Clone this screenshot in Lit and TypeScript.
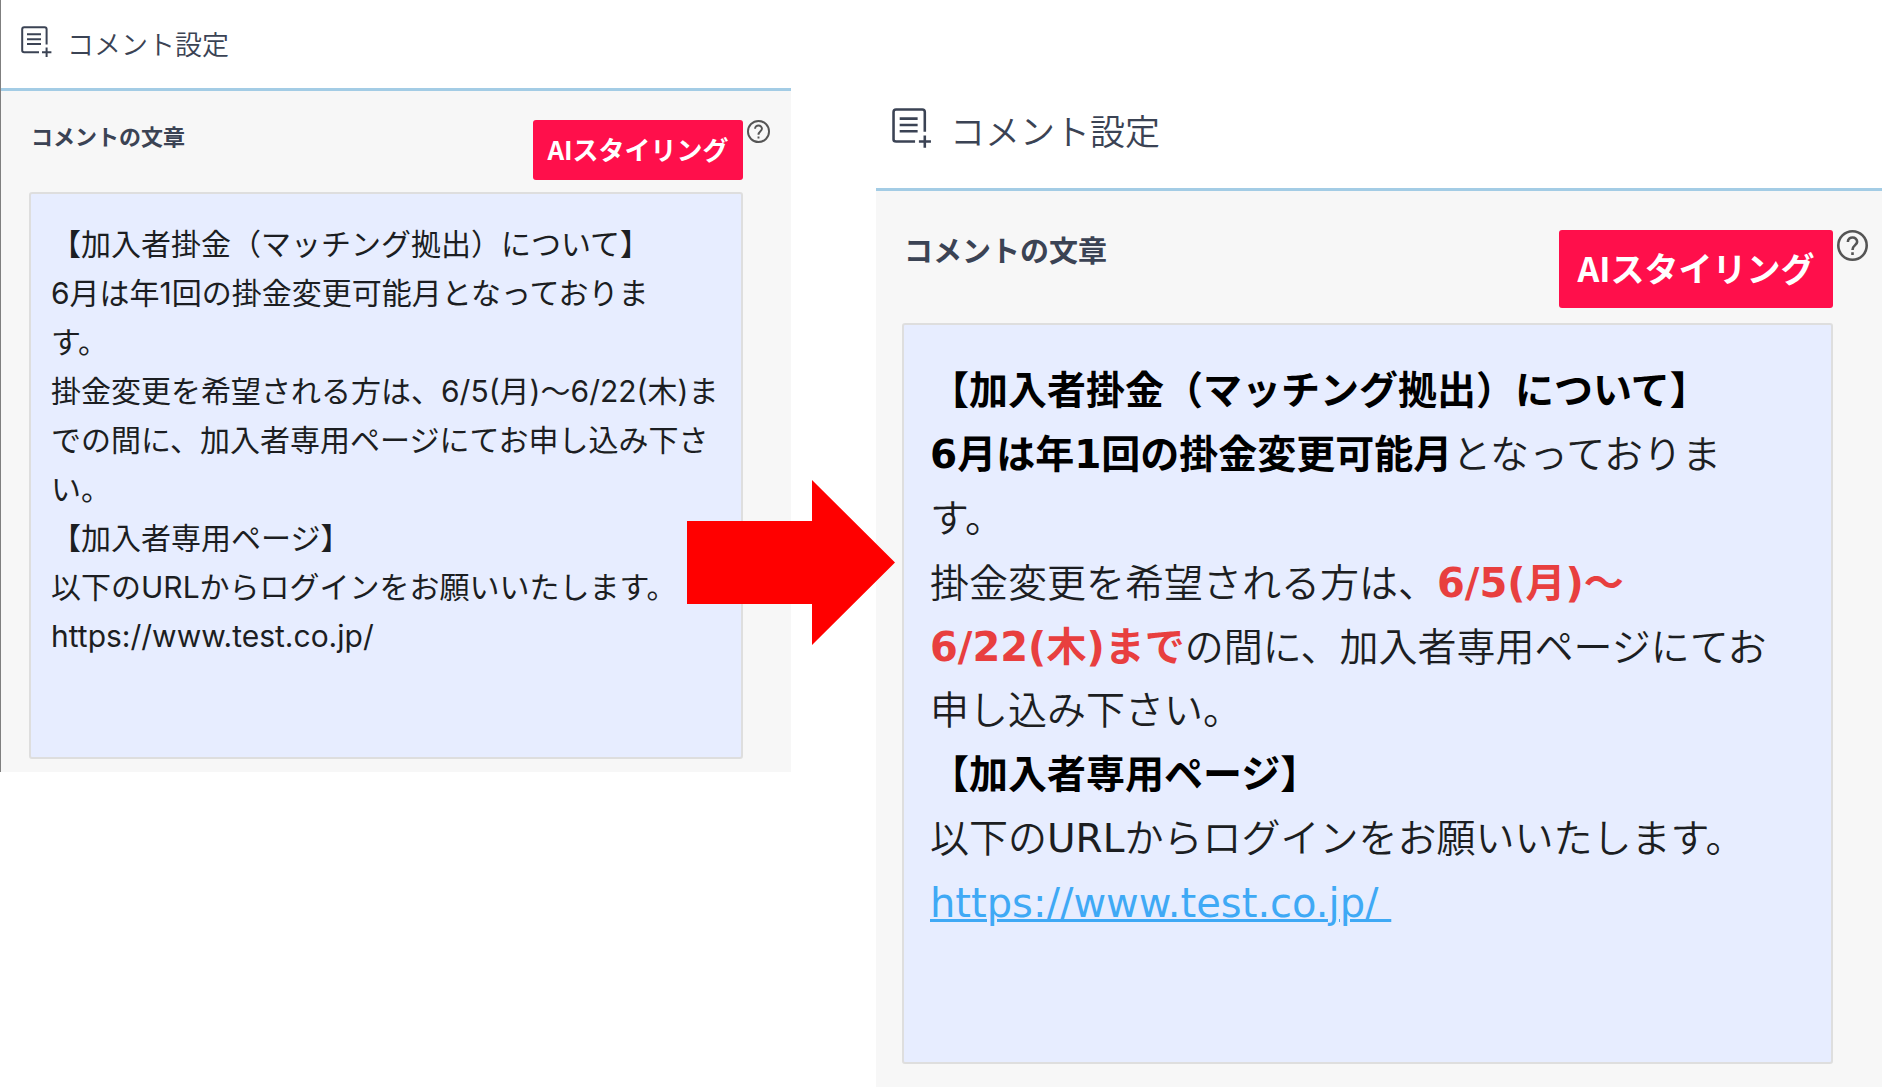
import { LitElement, html, css, svg, TemplateResult } from "lit";
import { customElement, property } from "lit/decorators.js";

const addNoteIcon = svg`
  <path d="M25.6 18.5V3.2Q25.6 1.2 23.6 1.2H3.2Q1.2 1.2 1.2 3.2V24.6Q1.2 26.2 3.2 26.2H18" />
  <path d="M6 8.3H20M6 13.2H20M6 18.1H20" />
  <path d="M25.6 21.4V31M21 26.2H30.4" />
`;

/** Comment settings panel: header, toolbar and an editing area. */
@customElement("comment-panel")
export class CommentPanel extends LitElement {
  @property({ reflect: true }) size: "small" | "large" = "small";

  static styles = css`
    :host {
      display: block;
      box-sizing: border-box;
      color: #3b4354;
      --title: 27px;
      --label: 22px;
      --action: 26px;
      --head-height: 88px;
      --head-pad: 20px;
      --head-bottom: 2px;
      --head-gap: 14px;
      --icon: 32px;
      --body-top: 29px;
      --body-left: 28px;
      --body-bottom: 13px;
      --label-line: 30px;
      --action-width: 210px;
      --action-height: 60px;
      --row-gap: 12px;
      --gutter: 48px;
      --help: 23px;
    }
    :host([size="small"]) {
      border-left: 1px solid #7f7f7f;
    }
    :host([size="large"]) {
      --title: 35px;
      --label: 29px;
      --action: 34px;
      --head-height: 102px;
      --head-pad: 16px;
      --head-bottom: 16px;
      --head-gap: 17px;
      --icon: 41px;
      --body-top: 39px;
      --body-left: 26px;
      --body-bottom: 23px;
      --label-line: 38px;
      --action-width: 274px;
      --action-height: 78px;
      --row-gap: 15px;
      --gutter: 49px;
      --help: 31px;
    }
    .head {
      display: flex;
      align-items: center;
      gap: var(--head-gap);
      box-sizing: content-box;
      height: calc(var(--head-height) - var(--head-bottom));
      padding: 0 0 var(--head-bottom) var(--head-pad);
      border-bottom: 3px solid #a3cce5;
      background: #fff;
    }
    .note {
      width: var(--icon);
      height: var(--icon);
      margin-bottom: 2px;
      fill: none;
      stroke: #3b4354;
      stroke-width: 2;
    }
    .title {
      margin: 0;
      font-size: var(--title);
      font-weight: 350;
      line-height: 1;
    }
    .body {
      display: grid;
      grid-template-columns: 1fr var(--action-width) var(--gutter);
      row-gap: var(--row-gap);
      align-items: start;
      padding: var(--body-top) 0 var(--body-bottom) var(--body-left);
      background: #f7f7f7;
    }
    .label {
      padding-left: 2px;
      font-size: var(--label);
      font-weight: 700;
      line-height: var(--label-line);
    }
    .action {
      height: var(--action-height);
      padding: 0 0 3px;
      border: 0;
      border-radius: 3px;
      background: #ff0f4b;
      color: #fff;
      font: 700 var(--action) "Noto Sans CJK JP", sans-serif;
      white-space: nowrap;
      cursor: pointer;
    }
    .help {
      display: flex;
      padding: 0 0 0 4px;
      border: 0;
      background: none;
      cursor: pointer;
    }
    .mark {
      width: var(--help);
      height: var(--help);
      fill: none;
      stroke: #555;
      stroke-width: 2;
    }
    .area {
      grid-column: 1 / 3;
      display: grid;
    }
  `;

  render(): TemplateResult {
    return html`
      <header class="head">
        <svg class="note" viewBox="0 0 32 32" aria-hidden="true">${addNoteIcon}</svg>
        <h2 class="title">コメント設定</h2>
      </header>
      <div class="body">
        <span class="label">コメントの文章</span>
        <button class="action" type="button">AIスタイリング</button>
        <button class="help" type="button" aria-label="ヘルプ">
          <svg class="mark" viewBox="0 0 24 24" aria-hidden="true">
            <circle cx="12" cy="12" r="11" />
            <path d="M8.4 9.2C8.4 4.6 15.8 4.8 15.6 9.2C15.5 11.8 12 11.8 12 15.4M12 17.2V19.4" />
          </svg>
        </button>
        <div class="area"><slot></slot></div>
      </div>
    `;
  }
}

const plainComment = [
  "【加入者掛金（マッチング拠出）について】",
  "6月は年1回の掛金変更可能月となっておりま",
  "す。",
  "掛金変更を希望される方は、6/5(月)～6/22(木)ま",
  "での間に、加入者専用ページにてお申し込み下さ",
  "い。",
  "【加入者専用ページ】",
  "以下のURLからログインをお願いいたします。",
  "https://www.test.co.jp/",
].join("\n");

@customElement("app-root")
export class AppRoot extends LitElement {
  static styles = css`
    :host {
      display: block;
      background: #fff;
      font-family: "Noto Sans CJK JP", sans-serif;
    }
    .page {
      position: relative;
      display: grid;
      grid-template-columns: 791fr 1006fr;
      column-gap: 85px;
      align-items: start;
    }
    .after {
      margin-top: 86px;
    }
    .editor {
      box-sizing: border-box;
      width: 100%;
      margin: 0;
      border: 2px solid #dedede;
      border-radius: 3px;
      outline: 0;
      background: #e7edff;
      color: #1c1e22;
      text-spacing-trim: space-all;
      overflow: hidden;
      resize: none;
    }
    .plain {
      height: 567px;
      padding: 26px 20px;
      font-family: "Inter", "Noto Sans CJK JP", sans-serif;
      font-size: 30px;
      font-weight: 400;
      line-height: 49px;
      white-space: pre;
    }
    .rich {
      min-height: 741px;
      padding: 34px 26px;
      font-family: "DejaVu Sans", "Noto Sans CJK JP", sans-serif;
      font-size: 39px;
      font-weight: 350;
      line-height: 64px;
      white-space: nowrap;
    }
    .strong {
      color: #000;
      font-weight: 700;
    }
    .alert {
      color: #e83f3f;
      font-size: 40px;
      font-weight: 700;
    }
    .line {
      height: 64px;
      margin: 0;
    }
    .latin {
      font-weight: 400;
    }
    .link {
      color: #3fa9f5;
      font-size: 40px;
      font-weight: 400;
      text-decoration: underline;
      text-decoration-thickness: 3px;
    }
    .arrow {
      position: absolute;
      top: 480px;
      left: calc(42% - 103px);
      width: 208px;
      height: 165px;
      fill: #f00;
    }
  `;

  render(): TemplateResult {
    return html`
      <main class="page">
        <comment-panel size="small">
          <textarea class="editor plain" aria-label="コメントの文章" spellcheck="false" .value=${plainComment}></textarea>
        </comment-panel>
        <comment-panel class="after" size="large">
          <div class="editor rich" role="textbox" aria-multiline="true" aria-label="コメントの文章">
            <p class="line"><b class="strong">【加入者掛金（マッチング拠出）について】</b></p>
            <p class="line"><b class="strong">6月は年1回の掛金変更可能月</b>となっておりま</p>
            <p class="line">す。</p>
            <p class="line">掛金変更を希望される方は、<b class="alert">6/5(月)～</b></p>
            <p class="line"><b class="alert">6/22(木)まで</b>の間に、加入者専用ページにてお</p>
            <p class="line">申し込み下さい。</p>
            <p class="line"><b class="strong">【加入者専用ページ】</b></p>
            <p class="line">以下の<span class="latin">URL</span>からログインをお願いいたします。</p>
            <p class="line"><a class="link" href="https://www.test.co.jp/">https://www.test.co.jp/&nbsp;</a></p>
          </div>
        </comment-panel>
        <svg class="arrow" viewBox="0 0 208 165" aria-hidden="true">
          <path d="M0 41H125V0L208 82.500L125 165V124H0Z" />
        </svg>
      </main>
    `;
  }
}
